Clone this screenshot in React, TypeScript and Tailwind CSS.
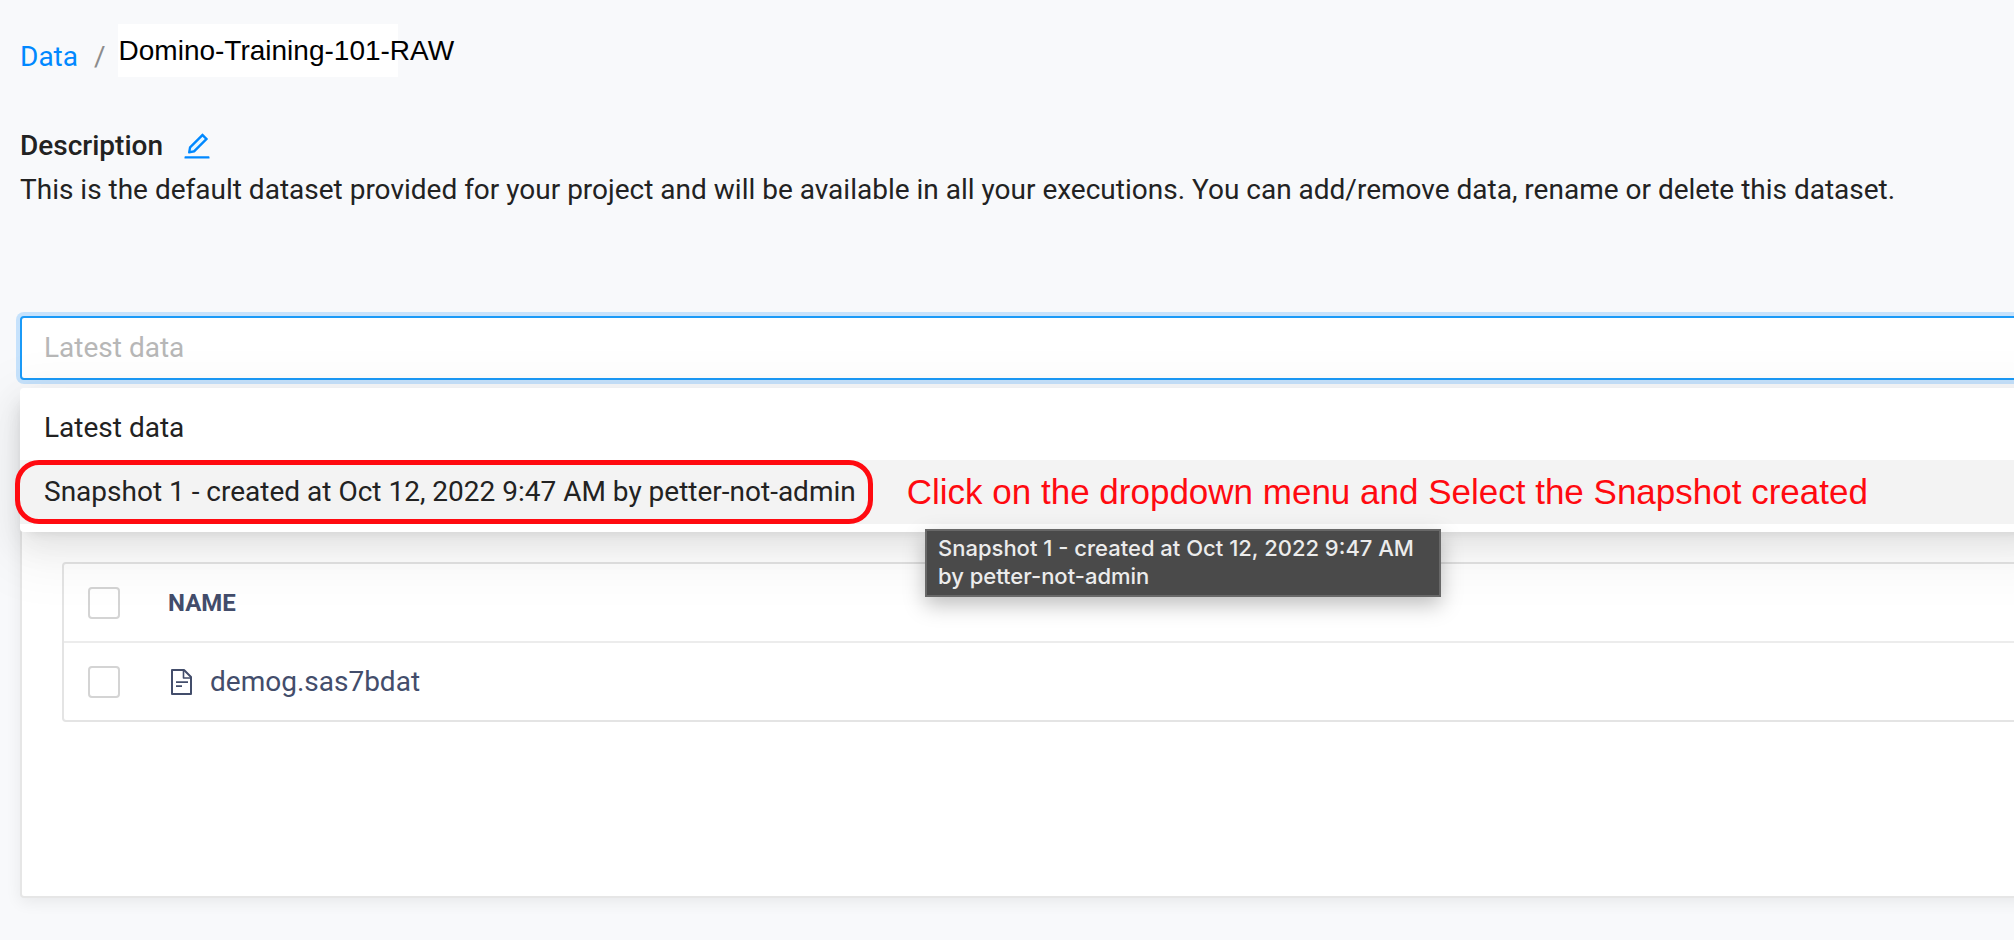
import React from "react";

function EditIcon() {
  return (
    <svg viewBox="0 0 1024 1024" className="size-8" aria-hidden="true">
      <path fill="#e6f7ff" d="M325 577 688 215l73 73-363 363-89 16z" />
      <path
        fill="currentColor"
        d="M257.7 752c2 0 4-.2 6-.5L431.9 722c2-.4 3.9-1.3 5.3-2.8l423.9-423.9a9.96 9.96 0 0 0 0-14.1L694.9 114.9c-1.9-1.9-4.4-2.9-7.1-2.9s-5.2 1-7.1 2.9L256.8 538.8c-1.5 1.5-2.4 3.3-2.8 5.3l-29.5 168.2a33.5 33.5 0 0 0 9.4 29.8c6.6 6.4 14.9 9.9 23.8 9.9zm67.4-174.4L687.8 215l73.3 73.3-362.7 362.6-88.9 15.7 15.6-89zM880 836H144c-17.7 0-32 14.3-32 32v36c0 4.4 3.6 8 8 8h784c4.4 0 8-3.6 8-8v-36c0-17.7-14.3-32-32-32z"
      />
    </svg>
  );
}

function FileIcon() {
  return (
    <svg
      viewBox="0 0 22 26"
      className="h-[26px] w-[22px]"
      fill="none"
      stroke="currentColor"
      strokeWidth="2"
      strokeLinejoin="round"
      aria-hidden="true"
    >
      <path d="M1 1h12l7 7v17H1z" />
      <path d="M12.5 1v8H20" strokeWidth="1.6" />
      <path d="M5 13.2h12M5 17.2h6" strokeWidth="1.8" />
    </svg>
  );
}

function Check({ label }: { label: string }) {
  return (
    <input
      type="checkbox"
      aria-label={label}
      className="block size-8 appearance-none rounded-[4px] border-2 border-[#d4d4d4] bg-white"
    />
  );
}

const snapshot = "Snapshot 1 - created at Oct 12, 2022 9:47 AM by petter-not-admin";

export default function App() {
  return (
    <main className="min-h-screen overflow-hidden bg-[#f8f9fb] pt-6 pl-5 font-['Roboto',sans-serif] text-[28px] leading-[44px] text-[#222222]">
      <nav aria-label="Breadcrumb" className="flex h-[53px] items-center">
        <a href="#data" className="pt-3 text-[#0088ff]">
          Data
        </a>
        <span className="pt-3 pr-3 pl-4 text-[#8c8c8c]">/</span>
        <span className="flex h-[53px] w-[280px] items-center bg-white pt-px pl-px font-['Liberation_Sans',Arial,sans-serif] whitespace-nowrap text-black">
          Domino-Training-101-RAW
        </span>
      </nav>

      <section className="mt-[47px]">
        <div className="flex items-center gap-[18px]">
          <h1 className="font-medium">Description</h1>
          <button type="button" aria-label="Edit description" className="text-[#0088ff]">
            <EditIcon />
          </button>
        </div>
        <p>
          This is the default dataset provided for your project and will be available in all your executions. You can
          add/remove data, rename or delete this dataset.
        </p>
      </section>

      <div className="relative z-10 mt-[104px] -mr-8">
        <select
          aria-label="Snapshot"
          className="block h-16 w-full appearance-none rounded-[4px] border-2 border-[#1b9af7] bg-white px-[22px] text-[#b7b7b7] shadow-[0_0_0_4px_rgba(24,144,255,0.22)] outline-none"
        >
          <option>Latest data</option>
        </select>

        <div className="absolute inset-x-0 top-full mt-2 rounded-[4px] bg-white py-2 shadow-[0_6px_12px_-8px_rgba(0,0,0,0.12),0_12px_32px_0_rgba(0,0,0,0.08),0_18px_56px_16px_rgba(0,0,0,0.05)]">
          <ul role="listbox" aria-label="Snapshots">
            <li role="option" aria-selected="false" className="flex h-16 items-center px-6">
              Latest data
            </li>
            <li role="option" aria-selected="true" className="flex h-16 items-center gap-[34px] bg-[#f3f3f3] whitespace-nowrap">
              <span className="-ml-[5px] flex h-16 items-center rounded-3xl border-5 border-[#ff0a10] pr-3 pl-6">
                {snapshot}
              </span>
              <span className="font-['Liberation_Sans',Arial,sans-serif] text-[35px] text-[#ff0a10]">
                Click on the dropdown menu and Select the Snapshot created
              </span>
            </li>
          </ul>
          <div
            role="tooltip"
            className="absolute top-[141px] left-[905px] w-[516px] border-2 border-[#686868] bg-[#4a4a4a] px-[11px] pt-[3px] pb-[5px] font-['Inter',sans-serif] text-[22px] leading-7 font-medium text-[#ececec] shadow-[0_8px_20px_rgba(0,0,0,0.25)]"
          >
            {snapshot}
          </div>
        </div>
      </div>

      <section className="mt-5 -mr-8 h-[498px] rounded-[4px] border-2 border-[#e6e6e6] bg-white pt-40 pl-10 shadow-[0_4px_16px_rgba(0,0,0,0.07)]">
        <div className="rounded-[4px] border-2 border-[#e4e4e4] text-[#434d6b]">
          <table className="w-full border-collapse text-left">
            <thead>
              <tr className="h-[78px] border-b-2 border-[#ececec]">
                <th className="w-[104px] pl-6">
                  <Check label="Select all files" />
                </th>
                <th className="text-[24px] font-bold">NAME</th>
              </tr>
            </thead>
            <tbody>
              <tr className="h-[78px]">
                <td className="pl-6">
                  <Check label="Select demog.sas7bdat" />
                </td>
                <td>
                  <div className="flex items-center gap-[17px] pl-[3px]">
                    <FileIcon />
                    demog.sas7bdat
                  </div>
                </td>
              </tr>
            </tbody>
          </table>
        </div>
      </section>
    </main>
  );
}
